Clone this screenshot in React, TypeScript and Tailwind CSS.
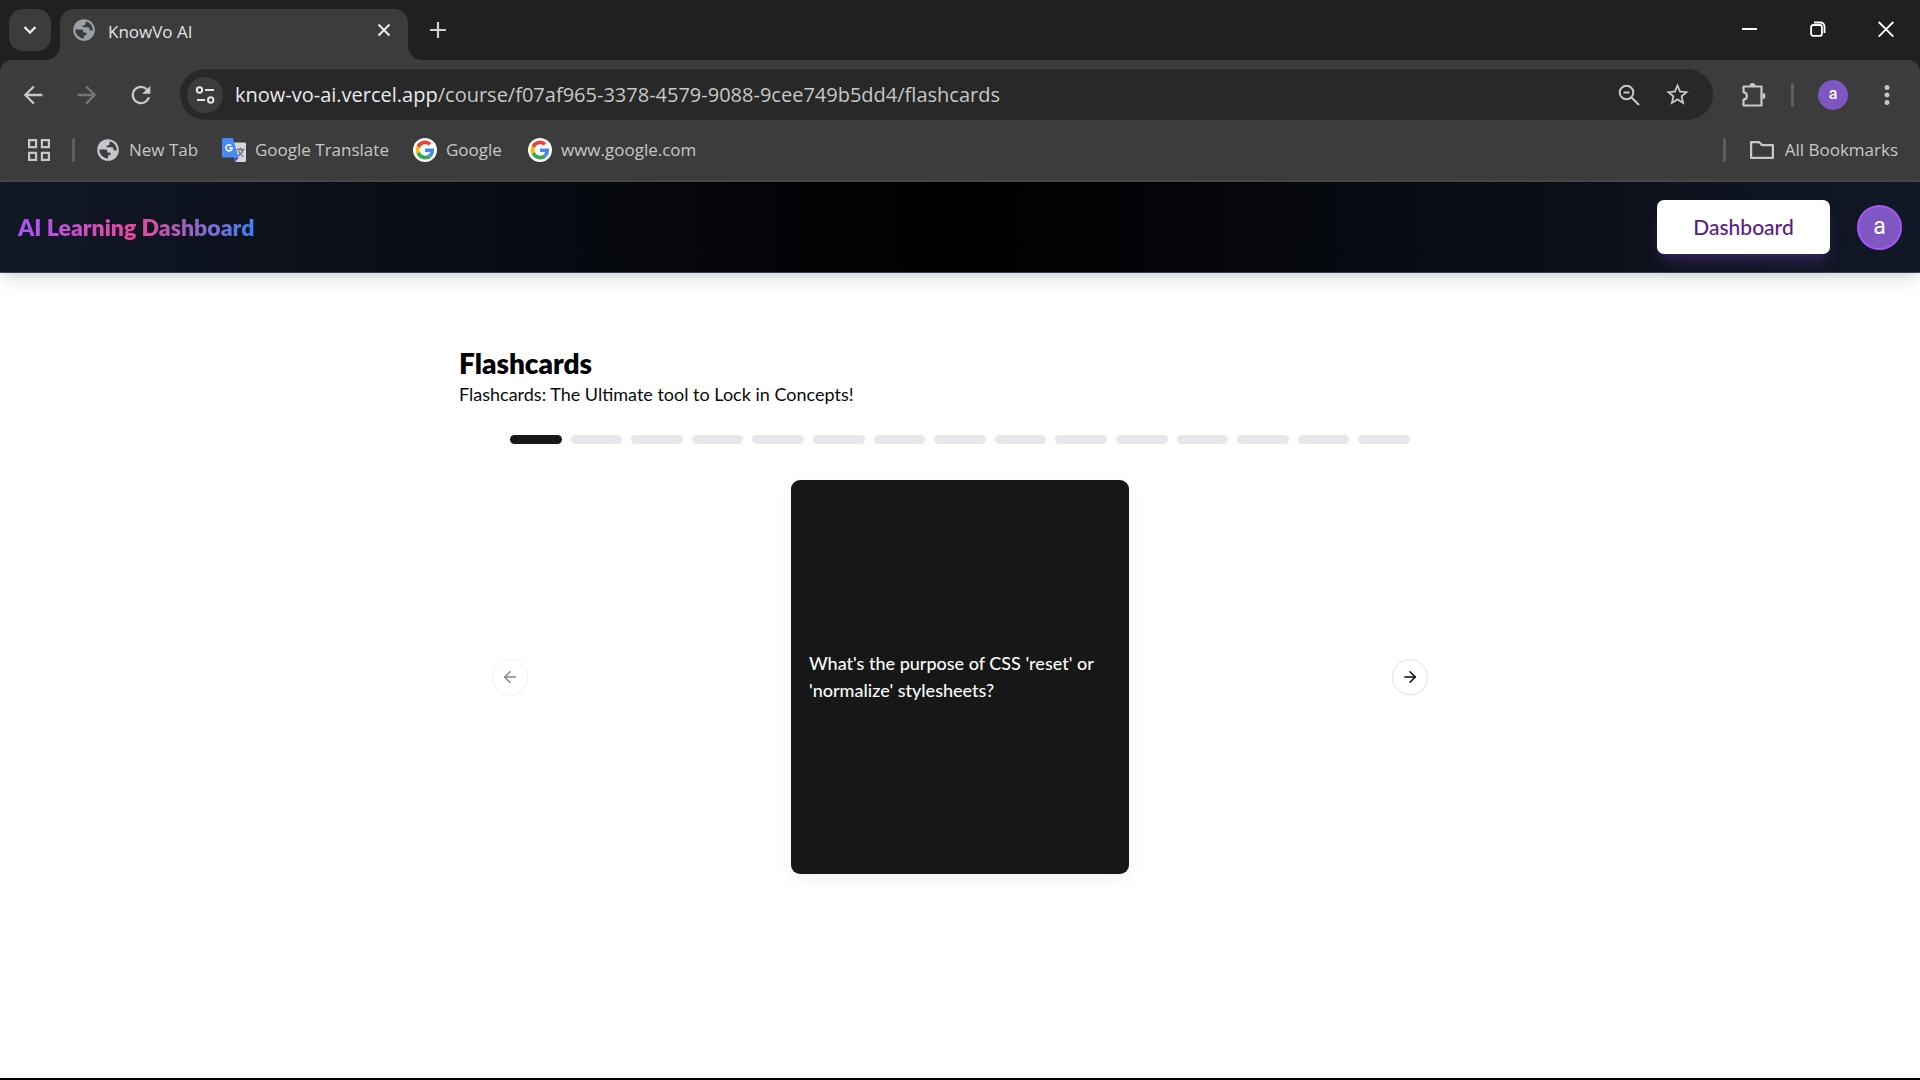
import React from "react";
import { MdArrowBack, MdArrowForward, MdMoreVert, MdRefresh, MdStarBorder } from "react-icons/md";
import { ArrowLeft, ArrowRight } from "lucide-react";

const CARD_COUNT = 15;
const CURRENT_CARD = 0;

function GlobeIcon({ className }: { className: string }) {
  return (
    <svg viewBox="0 0 22 22" className={className} aria-hidden="true">
      <circle cx="11" cy="11" r="10.8" fill="currentColor" />
      <path
        className="text-[#3c3c3c]"
        fill="currentColor"
        d="M2.300 10.500h6.200c1.200 0 1.800.6 1.800 1.500v1.600h1.800c.9 0 1.400.5 1.400 1.300v1.300h-2.400v3.400A9 9 0 0 1 2.300 10.500zM12.600 2.200a9 9 0 0 1 7.100 9.800c-.4-.5-.9-.7-1.600-.7h-1.700V9.700c0-1-.7-1.500-1.600-1.500H9.600V6.600h1c1.200 0 2-.8 2-2z"
      />
    </svg>
  );
}

function TranslateIcon() {
  return (
    <svg viewBox="0 0 24 24" className="size-6 shrink-0" aria-hidden="true">
      <path fill="#d5d7da" d="M9 4.5h13.5c.9 0 1.5.6 1.5 1.5v16.500c0 .9-.6 1.500-1.500 1.500H13z" />
      <path fill="#4a8af4" d="M1.500 0h9.300l5.700 19.500h-15A1.500 1.500 0 0 1 0 18V1.500C0 .7.700 0 1.500 0z" />
      <path fill="#3949ab" d="m12 19.500 1.200 4.500 3.600-4.500z" />
      <path fill="none" stroke="#66757f" strokeWidth="1.300" d="M14.500 11.500h8M18.300 9.500v2M21 11.500c-.7 3-2.700 5.200-5 6.500M16.500 13c1 2.500 3 4.500 5 5.500" />
      <path fill="none" stroke="#fff" strokeWidth="1.500" d="M9.300 7.600a3.100 3.100 0 1 0 .9 2.500H7.200" />
    </svg>
  );
}

function GoogleIcon() {
  return (
    <svg viewBox="0 0 24 24" className="size-6 shrink-0" aria-hidden="true">
      <circle cx="12" cy="12" r="12" fill="#fff" />
      <g transform="translate(2.600 2.600) scale(.392)">
        <path fill="#ea4335" d="M24 9.500c3.540 0 6.710 1.220 9.210 3.600l6.850-6.850C35.900 2.380 30.470 0 24 0 14.620 0 6.510 5.380 2.560 13.220l7.980 6.190C12.430 13.720 17.740 9.500 24 9.500z" />
        <path fill="#4285f4" d="M46.980 24.550c0-1.570-.15-3.090-.38-4.550H24v9.020h12.940c-.58 2.960-2.260 5.480-4.780 7.180l7.730 6c4.510-4.180 7.090-10.360 7.090-17.650z" />
        <path fill="#fbbc05" d="M10.530 28.590c-.48-1.450-.76-2.990-.76-4.590s.27-3.140.76-4.590l-7.980-6.190C.92 16.460 0 20.120 0 24c0 3.880.92 7.540 2.560 10.780l7.970-6.190z" />
        <path fill="#34a853" d="M24 48c6.480 0 11.930-2.130 15.890-5.810l-7.730-6c-2.150 1.450-4.920 2.300-8.160 2.300-6.260 0-11.570-4.220-13.470-9.910l-7.980 6.190C6.510 42.620 14.620 48 24 48z" />
      </g>
    </svg>
  );
}

function TabStrip() {
  return (
    <div className="flex h-[60px] shrink-0 items-start bg-[#1f2120] pl-[9px] pt-[9px]">
      <button aria-label="Search tabs" className="flex size-[42px] shrink-0 items-center justify-center rounded-[14px] bg-[#3c3c3c] text-[#e6e6e6]">
        <svg viewBox="0 0 14 14" className="size-[14px]" fill="none" stroke="currentColor" strokeWidth="2.400" aria-hidden="true">
          <path d="m1.500 4 5.500 5.500L12.500 4" />
        </svg>
      </button>
      <div className="relative ml-[9px] flex h-[51px] w-[348px] shrink-0 items-center rounded-t-[14px] bg-[#3c3c3c] pb-[9px] pl-[13px] pr-[17px]">
        <svg viewBox="0 0 14 14" className="absolute -left-[14px] bottom-0 size-[14px]" aria-hidden="true">
          <path d="M14 0A14 14 0 0 1 0 14H14z" fill="#3c3c3c" />
        </svg>
        <svg viewBox="0 0 14 14" className="absolute -right-[14px] bottom-0 size-[14px]" aria-hidden="true">
          <path d="M0 0A14 14 0 0 0 14 14H0z" fill="#3c3c3c" />
        </svg>
        <GlobeIcon className="size-[22px] shrink-0 text-[#9aa0a8]" />
        <span className="ml-[13px] flex-1 pt-[3px] text-[17px] leading-6 text-[#e3e3e3]">KnowVo AI</span>
        <button aria-label="Close tab" className="text-[#e6e6e6]">
          <svg viewBox="0 0 14 14" className="size-[14px]" stroke="currentColor" strokeWidth="2.200" aria-hidden="true">
            <path d="m1.500 1.500 11 11m0-11-11 11" />
          </svg>
        </button>
      </div>
      <button aria-label="New tab" className="ml-[22px] mt-[13px] text-[#d0d0d0]">
        <svg viewBox="0 0 16 16" className="size-4" stroke="currentColor" strokeWidth="2.200" aria-hidden="true">
          <path d="M8 0v16M0 8h16" />
        </svg>
      </button>
      <div className="ml-auto mr-[26px] mt-3 flex gap-[52px] text-white">
        <button aria-label="Minimize">
          <svg viewBox="0 0 16 16" className="size-4" stroke="currentColor" strokeWidth="2" aria-hidden="true">
            <path d="M0 8h15" />
          </svg>
        </button>
        <button aria-label="Restore">
          <svg viewBox="0 0 16 16" className="size-4" fill="none" stroke="currentColor" strokeWidth="1.800" aria-hidden="true">
            <rect x="1.100" y="4" width="10.800" height="10.800" rx="2" />
            <path d="M4 1.500h6.500a4 4 0 0 1 4 4V12" />
          </svg>
        </button>
        <button aria-label="Close">
          <svg viewBox="0 0 16 16" className="size-4" stroke="currentColor" strokeWidth="1.800" aria-hidden="true">
            <path d="m.700 1 14.600 14.600M15.300 1 .700 15.600" />
          </svg>
        </button>
      </div>
    </div>
  );
}

function Toolbar() {
  return (
    <div className="flex h-[51px] items-center text-[#c7c7c7]">
      <button aria-label="Back" className="ml-[19px]">
        <MdArrowBack className="size-[28px]" />
      </button>
      <button aria-label="Forward" className="ml-[26px] text-[#757575]" disabled>
        <MdArrowForward className="size-[28px]" />
      </button>
      <button aria-label="Reload" className="ml-[26px]">
        <MdRefresh className="size-[28px]" />
      </button>
      <div className="ml-[25px] flex h-[51px] flex-1 items-center rounded-full bg-[#282828] pl-[7px] pr-[22px]">
        <button aria-label="View site information" className="flex size-9 shrink-0 items-center justify-center rounded-full bg-[#3c3c3c] text-[#e3e3e3]">
          <svg viewBox="0 0 20 20" className="size-5" fill="none" stroke="currentColor" strokeWidth="2" aria-hidden="true">
            <circle cx="4.500" cy="5" r="2.700" />
            <path d="M10 5h9M2 15h8" />
            <circle cx="15.700" cy="15" r="2.700" />
          </svg>
        </button>
        <div className="ml-3 flex-1 whitespace-nowrap text-[20px] leading-7">
          <span className="text-[#e8eaed]">know-vo-ai.vercel.app</span>
          <span>/course/f07af965-3378-4579-9088-9cee749b5dd4/flashcards</span>
        </div>
        <button aria-label="Zoom">
          <svg viewBox="0 0 22 22" className="size-[22px]" fill="none" stroke="currentColor" strokeWidth="2" aria-hidden="true">
            <circle cx="8.500" cy="8.500" r="6.800" />
            <path d="M5.500 8.500h6M13.500 13.500l7.500 7.500" />
          </svg>
        </button>
        <button aria-label="Bookmark this tab" className="ml-6">
          <MdStarBorder className="size-[27px]" />
        </button>
      </div>
      <button aria-label="Extensions" className="ml-7">
        <svg viewBox="0 0 26 26" className="size-[26px]" aria-hidden="true">
          <path
            fill="none"
            stroke="currentColor"
            strokeWidth="2.200"
            strokeLinejoin="round"
            d="M2.500 4.500h18v19h-18v-5.800c4.500-.6 4.500-7 0-7.600z"
          />
          <path fill="currentColor" d="M8.500 4a3 3 0 0 1 6 0zM21.500 11a3 3 0 0 1 0 6z" />
        </svg>
      </button>
      <div className="ml-6 h-6 w-[3px] rounded-full bg-[#5f5f5f]" />
      <button aria-label="Profile" className="ml-6 flex size-[30px] items-center justify-center rounded-full bg-[#7e57c2] pb-px font-['Roboto',sans-serif] text-[16px] font-medium leading-5 text-white">
        a
      </button>
      <button aria-label="Menu" className="ml-6 mr-[18px]">
        <MdMoreVert className="size-[30px]" />
      </button>
    </div>
  );
}

function BookmarksBar() {
  return (
    <nav aria-label="Bookmarks" className="flex h-[60px] items-center whitespace-nowrap pl-7 pr-[22px] text-[17px] leading-6 text-[#c7c7c7]">
      <button aria-label="Apps">
        <svg viewBox="0 0 22 22" className="size-[22px]" fill="none" stroke="currentColor" strokeWidth="2.200" aria-hidden="true">
          <path d="M1.100 1.100h7v7h-7zM13.900 1.100h7v7h-7zM1.100 13.900h7v7h-7zM13.900 13.900h7v7h-7z" />
        </svg>
      </button>
      <div className="ml-[22px] h-6 w-[3px] rounded-full bg-[#5f5f5f]" />
      <a href="#" className="ml-[22px] flex w-[125px] items-center gap-[10px]">
        <GlobeIcon className="size-[22px] shrink-0 text-[#c4c7cc]" />
        New Tab
      </a>
      <a href="#" className="flex w-[191px] items-center gap-[9px]">
        <TranslateIcon />
        Google Translate
      </a>
      <a href="#" className="flex w-[115px] items-center gap-[9px]">
        <GoogleIcon />
        Google
      </a>
      <a href="#" className="flex items-center gap-[9px]">
        <GoogleIcon />
        www.google.com
      </a>
      <div className="ml-auto h-6 w-[3px] rounded-full bg-[#5f5f5f]" />
      <button className="ml-6 flex items-center gap-[11px]">
        <svg viewBox="0 0 24 18" className="h-[18px] w-6" fill="none" stroke="currentColor" strokeWidth="2.200" strokeLinejoin="round" aria-hidden="true">
          <path d="M1.100 1.100h8l3 3h10.800v12.800H1.100z" />
        </svg>
        All Bookmarks
      </button>
    </nav>
  );
}

function SiteHeader() {
  return (
    <header className="relative flex h-[91px] shrink-0 items-center border-b border-[#334155] bg-[linear-gradient(to_right,#111827,#000000,#111827)] px-[18px] shadow-[0_11px_17px_-3px_rgba(0,0,0,0.1),0_5px_7px_-4px_rgba(0,0,0,0.1)]">
      <h1 className="bg-[linear-gradient(to_right,#a855f7,#ec4899,#3b82f6)] bg-clip-text text-[23px] font-extrabold leading-8 text-transparent">
        AI Learning Dashboard
      </h1>
      <a href="#" className="ml-auto flex h-[54px] w-[173px] items-center justify-center rounded-[7px] bg-white text-[21px] font-medium leading-7 text-[#581c87] shadow-[0_11px_17px_-3px_rgba(168,85,247,0.2),0_5px_7px_-4px_rgba(168,85,247,0.2)]">
        Dashboard
      </a>
      <button aria-label="Account" className="ml-[27px] flex size-[45px] items-center justify-center rounded-full border-2 border-[#a855f7] bg-[#7e57c2] pb-px font-['Roboto',sans-serif] text-[23px] leading-7 text-white">
        a
      </button>
    </header>
  );
}

function Flashcards() {
  return (
    <main className="mx-auto w-full max-w-[1002px] flex-1 pt-[72px]">
      <h2 className="text-[28px] font-extrabold leading-9 text-black">Flashcards</h2>
      <p className="text-[18px] leading-[27px]">Flashcards: The Ultimate tool to Lock in Concepts!</p>
      <div className="mx-auto mt-[27px] flex max-w-[900px] gap-[9px]" role="progressbar" aria-label="Cards viewed" aria-valuemin={0} aria-valuemax={CARD_COUNT} aria-valuenow={CURRENT_CARD + 1}>
        {Array.from({ length: CARD_COUNT }, (_, i) => (
          <div key={i} className={i <= CURRENT_CARD ? "h-[9px] flex-1 rounded-full bg-[#171717]" : "h-[9px] flex-1 rounded-full bg-[#e5e7eb]"} />
        ))}
      </div>
      <div className="mx-auto mt-9 flex max-w-[936px] items-center justify-between">
        <button aria-label="Previous card" disabled className="flex size-9 items-center justify-center rounded-full border border-[#e5e5e5] bg-white opacity-50 shadow-xs">
          <ArrowLeft className="size-[18px]" />
        </button>
        <button className="flex h-[394px] w-[338px] items-center rounded-[9px] bg-[#171717] px-[18px] text-left text-[18px] font-medium leading-[27px] text-[#fafafa] shadow-[0_5px_16px_rgba(0,0,0,0.06)]">
          What's the purpose of CSS 'reset' or 'normalize' stylesheets?
        </button>
        <button aria-label="Next card" className="flex size-9 items-center justify-center rounded-full border border-[#e5e5e5] bg-white shadow-xs">
          <ArrowRight className="size-[18px]" />
        </button>
      </div>
    </main>
  );
}

export default function App() {
  return (
    <div className="flex min-h-screen flex-col border-b-2 border-black bg-white font-['Lato',sans-serif] text-[#0a0a0a]">
      <div className="font-['Open_Sans',sans-serif]">
        <TabStrip />
        <div className="bg-[#1f2120]">
          <div className="rounded-t-[12px] border-b-2 border-[#474747] bg-[#3c3c3c] pt-[9px]">
            <Toolbar />
            <BookmarksBar />
          </div>
        </div>
      </div>
      <SiteHeader />
      <Flashcards />
    </div>
  );
}
